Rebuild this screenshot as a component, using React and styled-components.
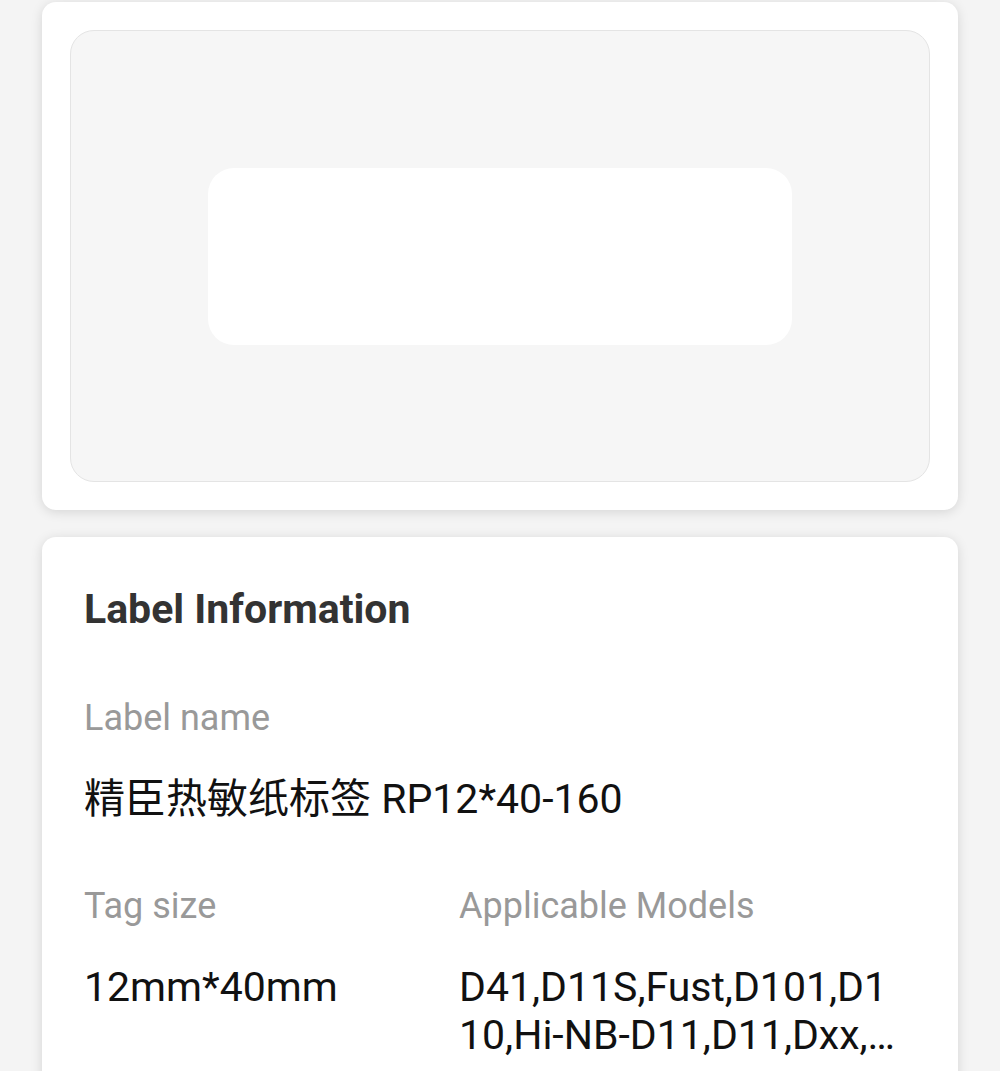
import React from 'react';
import styled, { createGlobalStyle } from 'styled-components';

const GlobalStyle = createGlobalStyle`
  html, body {
    margin: 0;
    padding: 0;
    background: #f4f4f4;
    font-family: Roboto, "Noto Sans CJK SC", sans-serif;
  }
`;

const label = {
  name: '精臣热敏纸标签 RP12*40-160',
  size: '12mm*40mm',
  models: 'D41,D11S,Fust,D101,D110,Hi-NB-D11,D11,Dxx,D110_M,D101_M,B21,B3S',
};

function App() {
  return (
    <>
      <GlobalStyle />
      <Page>
        <Card>
          <Preview>
            <LabelShape />
          </Preview>
        </Card>

        <InfoCard>
          <Title>Label Information</Title>
          <Field>
            <FieldLabel>Label name</FieldLabel>
            <FieldValue>{label.name}</FieldValue>
          </Field>
          <Row>
            <Field>
              <FieldLabel>Tag size</FieldLabel>
              <FieldValue>{label.size}</FieldValue>
            </Field>
            <Field>
              <FieldLabel>Applicable Models</FieldLabel>
              <FieldValue clamp>{label.models}</FieldValue>
            </Field>
          </Row>
        </InfoCard>
      </Page>
    </>
  );
}

export default App;

const Page = styled.div`
  display: flex;
  flex-direction: column;
  gap: 27px;
  padding: 2px 42px 0;
  height: 1071px;
  overflow: hidden;
  box-sizing: border-box;
`;

const Card = styled.div`
  flex-shrink: 0;
  background: #ffffff;
  border-radius: 14px;
  box-shadow: 0 2px 12px rgba(0, 0, 0, 0.13);
  padding: 28px;
  height: 508px;
  box-sizing: border-box;
`;

const Preview = styled.div`
  height: 100%;
  background: #f6f6f6;
  border: 1px solid #e4e4e4;
  border-radius: 24px;
  box-sizing: border-box;
  display: flex;
  align-items: center;
  justify-content: center;
`;

const LabelShape = styled.div`
  width: 584px;
  height: 177px;
  background: #ffffff;
  border-radius: 26px;
`;

const InfoCard = styled(Card)`
  flex: 1 0 auto;
  height: auto;
  padding: 48px 56px 40px 42px;
  border-radius: 14px 14px 0 0;
  display: flex;
  flex-direction: column;
  gap: 62px;
`;

const Title = styled.div`
  font-size: 41px;
  line-height: 48px;
  font-weight: 700;
  color: #333333;
  margin-bottom: 2px;
`;

const Field = styled.div`
  display: flex;
  flex-direction: column;
  gap: 36px;
  min-width: 0;
`;

const Row = styled.div`
  display: grid;
  grid-template-columns: 375px 1fr;
`;

const FieldLabel = styled.div`
  font-size: 36px;
  line-height: 42px;
  color: #999999;
`;

const FieldValue = styled.div`
  font-size: 41px;
  line-height: 48px;
  color: #111111;
  ${(p) =>
    p.clamp &&
    `
    word-break: break-all;
    display: -webkit-box;
    -webkit-line-clamp: 2;
    -webkit-box-orient: vertical;
    overflow: hidden;
  `}
`;
